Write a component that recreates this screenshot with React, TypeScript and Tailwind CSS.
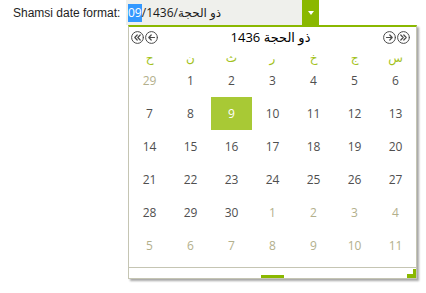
import React from "react";

const weekdays = ["ح", "ن", "ث", "ر", "خ", "ج", "س"];

type Day = { n: number; out?: boolean; selected?: boolean };

const weeks: Day[][] = [
  [{ n: 29, out: true }, { n: 1 }, { n: 2 }, { n: 3 }, { n: 4 }, { n: 5 }, { n: 6 }],
  [{ n: 7 }, { n: 8 }, { n: 9, selected: true }, { n: 10 }, { n: 11 }, { n: 12 }, { n: 13 }],
  [{ n: 14 }, { n: 15 }, { n: 16 }, { n: 17 }, { n: 18 }, { n: 19 }, { n: 20 }],
  [{ n: 21 }, { n: 22 }, { n: 23 }, { n: 24 }, { n: 25 }, { n: 26 }, { n: 27 }],
  [
    { n: 28 },
    { n: 29 },
    { n: 30 },
    { n: 1, out: true },
    { n: 2, out: true },
    { n: 3, out: true },
    { n: 4, out: true },
  ],
  [5, 6, 7, 8, 9, 10, 11].map((n) => ({ n, out: true })),
];

function NavIcon({ kind }: { kind: "first" | "prev" | "next" | "last" }) {
  let inner: React.ReactNode = null;
  if (kind === "first") {
    inner = <path d="M6.2 4 L3.8 6.5 L6.2 9 M9.2 4 L6.8 6.5 L9.2 9" />;
  } else if (kind === "prev") {
    inner = <path d="M9.5 6.5 H3.8 M6.2 4 L3.8 6.5 L6.2 9" />;
  } else if (kind === "next") {
    inner = <path d="M3.5 6.5 H9.2 M6.8 4 L9.2 6.5 L6.8 9" />;
  } else {
    inner = <path d="M3.8 4 L6.2 6.5 L3.8 9 M6.8 4 L9.2 6.5 L6.8 9" />;
  }
  return (
    <svg
      width="13"
      height="13"
      viewBox="0 0 13 13"
      fill="none"
      stroke="#4a4a4a"
      strokeWidth="1.2"
      strokeLinecap="round"
      strokeLinejoin="round"
    >
      <circle cx="6.5" cy="6.5" r="5.9" strokeWidth="1" />
      {inner}
    </svg>
  );
}

export default function App() {
  return (
    <div className="h-[293px] w-[426px] overflow-hidden bg-white">
      <div className="flex items-start pl-[13px]">
        <div className="w-[113px] pt-[1px] text-[12px] leading-[25px] text-[#1e1e1e] [font-family:'Liberation_Sans',Arial,sans-serif]">
          Shamsi date format:
        </div>

        <div className="flex flex-col">
          <div className="flex h-[25px] w-[193px]">
            <div className="flex flex-1 items-center overflow-hidden whitespace-nowrap bg-[#eff0ec] pl-[2px] pt-[1px] text-[12px] text-[#1a1a1a] [font-family:'Open_Sans','DejaVu_Sans',sans-serif]">
              <span className="bg-[#3399ff] text-white">09</span>
              <span>/1436/ذو الحجة</span>
            </div>
            <div className="flex w-[17px] items-center justify-center bg-[#8ab800]">
              <svg width="6" height="4" viewBox="0 0 6 4">
                <path d="M0 0 H6 L3 4 Z" fill="white" />
              </svg>
            </div>
          </div>

          <div className="ml-[2px] flex h-[254px] w-[289px] flex-col border-x border-b border-t-2 border-x-[#c5c5b3] border-b-[#c5c5b3] border-t-[#8ab800] bg-white shadow-[2px_2px_2px_rgba(0,0,0,0.35)] [font-family:'Open_Sans','DejaVu_Sans',sans-serif]">
            <div className="flex h-[21px] items-center pl-[2px] pr-[6px]">
              <div className="flex gap-[1px]">
                <NavIcon kind="first" />
                <NavIcon kind="prev" />
              </div>
              <div
                dir="rtl"
                className="flex-1 text-center text-[13px] text-black"
              >
                ذو الحجة 1436
              </div>
              <div className="flex gap-[1px]">
                <NavIcon kind="next" />
                <NavIcon kind="last" />
              </div>
            </div>

            <div className="grid h-[16px] grid-cols-7 items-center pt-[3px] text-[12px] leading-[13px] text-[#a3c21c]">
              {weekdays.map((w, i) => (
                <div key={i} className="text-center">
                  {w}
                </div>
              ))}
            </div>

            <div className="grid grid-cols-7 grid-rows-6">
              {weeks.flat().map((d, i) => (
                <div
                  key={i}
                  className={
                    d.selected
                      ? "flex h-[33px] items-center justify-center bg-[#a8c935] text-[12px] text-white"
                      : d.out
                        ? "flex h-[33px] items-center justify-center text-[12px] text-[#b3b08c]"
                        : "flex h-[33px] items-center justify-center text-[12px] text-[#4f4f4f]"
                  }
                >
                  {d.n}
                </div>
              ))}
            </div>

            <div className="mt-[5px] flex flex-1 items-end justify-between border-t border-[#c5c5b3]">
              <div className="w-[9px]" />
              <div className="h-[3px] w-[23px] bg-[#8ab800]" />
              <svg width="9" height="9" viewBox="0 0 9 9">
                <path d="M6 0 H9 V9 H0 V5 H6 Z" fill="#8ab800" />
              </svg>
            </div>
          </div>
        </div>
      </div>
    </div>
  );
}
